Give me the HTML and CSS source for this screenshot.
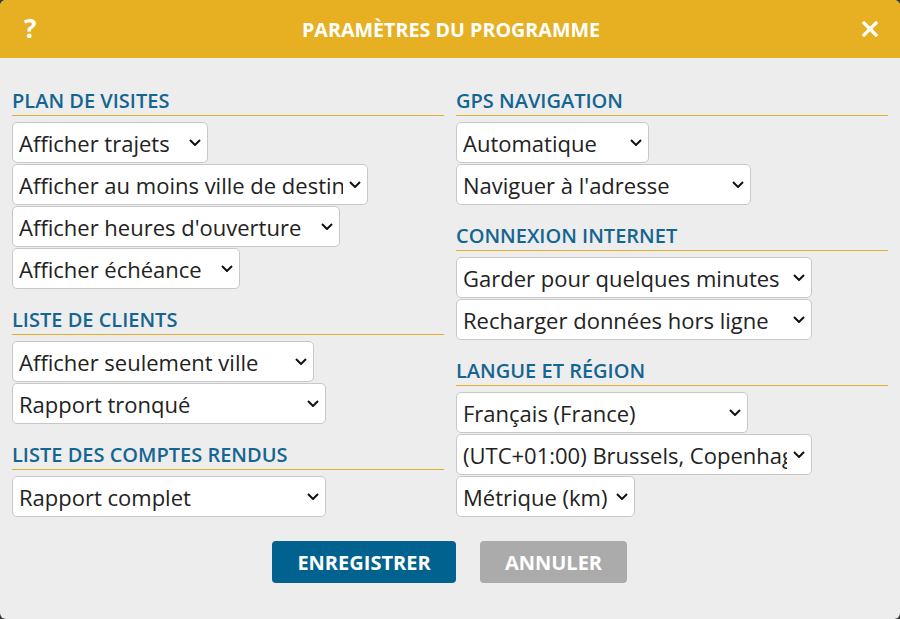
FILE: index.html
```html
<!DOCTYPE html>
<html lang="fr">
<head>
<meta charset="utf-8">
<title>Paramètres du programme</title>
<link rel="stylesheet" href="styles.css">
</head>
<body>
<div class="dialog">
  <header class="dialog-header">
    <span class="help">?</span>
    <h1 class="title">PARAMÈTRES DU PROGRAMME</h1>
    <svg class="close" width="16" height="16" viewBox="0 0 16 16"><path d="M2 2 L14 14 M14 2 L2 14" stroke="#fff" stroke-width="3.2" stroke-linecap="square"/></svg>
  </header>
  <div class="dialog-body">
    <div class="column">
      <section class="group">
        <h2 class="group-title">PLAN DE VISITES</h2>
        <div class="fields">
          <label class="select w196"><select class="field"><option>Afficher trajets</option></select><svg class="chevron" width="12" height="7" viewBox="0 0 12 7"><path d="M1 1 L6 6 L11 1" fill="none" stroke="#111" stroke-width="2"/></svg></label>
          <label class="select w356"><select class="field"><option>Afficher au moins ville de destination</option></select><svg class="chevron" width="12" height="7" viewBox="0 0 12 7"><path d="M1 1 L6 6 L11 1" fill="none" stroke="#111" stroke-width="2"/></svg></label>
          <label class="select w328"><select class="field"><option>Afficher heures d'ouverture</option></select><svg class="chevron" width="12" height="7" viewBox="0 0 12 7"><path d="M1 1 L6 6 L11 1" fill="none" stroke="#111" stroke-width="2"/></svg></label>
          <label class="select w228"><select class="field"><option>Afficher échéance</option></select><svg class="chevron" width="12" height="7" viewBox="0 0 12 7"><path d="M1 1 L6 6 L11 1" fill="none" stroke="#111" stroke-width="2"/></svg></label>
        </div>
      </section>
      <section class="group">
        <h2 class="group-title">LISTE DE CLIENTS</h2>
        <div class="fields">
          <label class="select w302"><select class="field"><option>Afficher seulement ville</option></select><svg class="chevron" width="12" height="7" viewBox="0 0 12 7"><path d="M1 1 L6 6 L11 1" fill="none" stroke="#111" stroke-width="2"/></svg></label>
          <label class="select w314"><select class="field"><option>Rapport tronqué</option></select><svg class="chevron" width="12" height="7" viewBox="0 0 12 7"><path d="M1 1 L6 6 L11 1" fill="none" stroke="#111" stroke-width="2"/></svg></label>
        </div>
      </section>
      <section class="group">
        <h2 class="group-title">LISTE DES COMPTES RENDUS</h2>
        <div class="fields">
          <label class="select w314"><select class="field"><option>Rapport complet</option></select><svg class="chevron" width="12" height="7" viewBox="0 0 12 7"><path d="M1 1 L6 6 L11 1" fill="none" stroke="#111" stroke-width="2"/></svg></label>
        </div>
      </section>
    </div>
    <div class="column">
      <section class="group">
        <h2 class="group-title">GPS NAVIGATION</h2>
        <div class="fields">
          <label class="select w193"><select class="field"><option>Automatique</option></select><svg class="chevron" width="12" height="7" viewBox="0 0 12 7"><path d="M1 1 L6 6 L11 1" fill="none" stroke="#111" stroke-width="2"/></svg></label>
          <label class="select w295"><select class="field"><option>Naviguer à l'adresse</option></select><svg class="chevron" width="12" height="7" viewBox="0 0 12 7"><path d="M1 1 L6 6 L11 1" fill="none" stroke="#111" stroke-width="2"/></svg></label>
        </div>
      </section>
      <section class="group">
        <h2 class="group-title">CONNEXION INTERNET</h2>
        <div class="fields">
          <label class="select w356"><select class="field"><option>Garder pour quelques minutes</option></select><svg class="chevron" width="12" height="7" viewBox="0 0 12 7"><path d="M1 1 L6 6 L11 1" fill="none" stroke="#111" stroke-width="2"/></svg></label>
          <label class="select w356"><select class="field"><option>Recharger données hors ligne</option></select><svg class="chevron" width="12" height="7" viewBox="0 0 12 7"><path d="M1 1 L6 6 L11 1" fill="none" stroke="#111" stroke-width="2"/></svg></label>
        </div>
      </section>
      <section class="group">
        <h2 class="group-title">LANGUE ET RÉGION</h2>
        <div class="fields">
          <label class="select w292"><select class="field"><option>Français (France)</option></select><svg class="chevron" width="12" height="7" viewBox="0 0 12 7"><path d="M1 1 L6 6 L11 1" fill="none" stroke="#111" stroke-width="2"/></svg></label>
          <label class="select w356"><select class="field"><option>(UTC+01:00) Brussels, Copenhagen, Madrid, Paris</option></select><svg class="chevron" width="12" height="7" viewBox="0 0 12 7"><path d="M1 1 L6 6 L11 1" fill="none" stroke="#111" stroke-width="2"/></svg></label>
          <label class="select w179"><select class="field"><option>Métrique (km)</option></select><svg class="chevron" width="12" height="7" viewBox="0 0 12 7"><path d="M1 1 L6 6 L11 1" fill="none" stroke="#111" stroke-width="2"/></svg></label>
        </div>
      </section>
    </div>
  </div>
  <footer class="dialog-footer">
    <button class="btn btn-primary">ENREGISTRER</button>
    <button class="btn btn-muted">ANNULER</button>
  </footer>
</div>
</body>
</html>
```
FILE: styles.css
```css
html, body {
  margin: 0;
  padding: 0;
  background: #3a3a3a;
}
body {
  font-family: "Open Sans", "Liberation Sans", sans-serif;
}
.dialog {
  width: 900px;
  height: 619px;
  background: #ededed;
  border-radius: 6px;
  overflow: hidden;
  display: flex;
  flex-direction: column;
}
.dialog-header {
  height: 58px;
  background: #e6b022;
  display: flex;
  align-items: center;
  justify-content: space-between;
  padding: 0 22px 0 23px;
  color: #fff;
}
.help {
  font-weight: 700;
  font-size: 26px;
  line-height: 1;
  width: 16px;
  margin-top: -2px;
  padding-left: 1px;
}
.title {
  margin: 0;
  font-size: 19.7px;
  font-weight: 700;
  letter-spacing: 0;
}
.close {
  display: block;
}
.dialog-body {
  display: grid;
  grid-template-columns: 1fr 1fr;
  column-gap: 12px;
  padding: 12px 12px 0;
}
.group {
  margin-top: 17px;
}
.group-title {
  margin: 0;
  font-size: 20px;
  line-height: 27px;
  font-weight: 600;
  color: #146591;
  padding-bottom: 1px;
  border-bottom: 1px solid #e3b02e;
}
.fields {
  margin-top: 6px;
  display: flex;
  flex-direction: column;
  align-items: flex-start;
  gap: 1px;
}
.select {
  position: relative;
  display: block;
  height: 41px;
}
.field {
  display: block;
  width: 100%;
  height: 41px;
  -webkit-appearance: none;
  appearance: none;
  font-family: "Open Sans", "Liberation Sans", sans-serif;
  font-size: 22px;
  color: #222;
  background: #fff;
  border: 1px solid #c8c8c8;
  border-radius: 5px;
  padding: 0 24px 0 6px;
  outline: none;
}
.chevron {
  position: absolute;
  right: 7px;
  top: 17px;
  pointer-events: none;
}
.w179 { width: 179px; }
.w193 { width: 193px; }
.w196 { width: 196px; }
.w228 { width: 228px; }
.w292 { width: 292px; }
.w295 { width: 295px; }
.w302 { width: 302px; }
.w314 { width: 314px; }
.w328 { width: 328px; }
.w356 { width: 356px; }
.dialog-footer {
  display: flex;
  justify-content: center;
  gap: 24px;
  margin-top: 24px;
  padding-right: 1px;
}
.btn {
  height: 42px;
  border: none;
  border-radius: 4px;
  color: #fff;
  font-family: "Open Sans", "Liberation Sans", sans-serif;
  font-weight: 700;
  font-size: 20px;
}
.btn-primary {
  width: 184px;
  background: #01628f;
}
.btn-muted {
  width: 147px;
  background: #ababab;
}
```
